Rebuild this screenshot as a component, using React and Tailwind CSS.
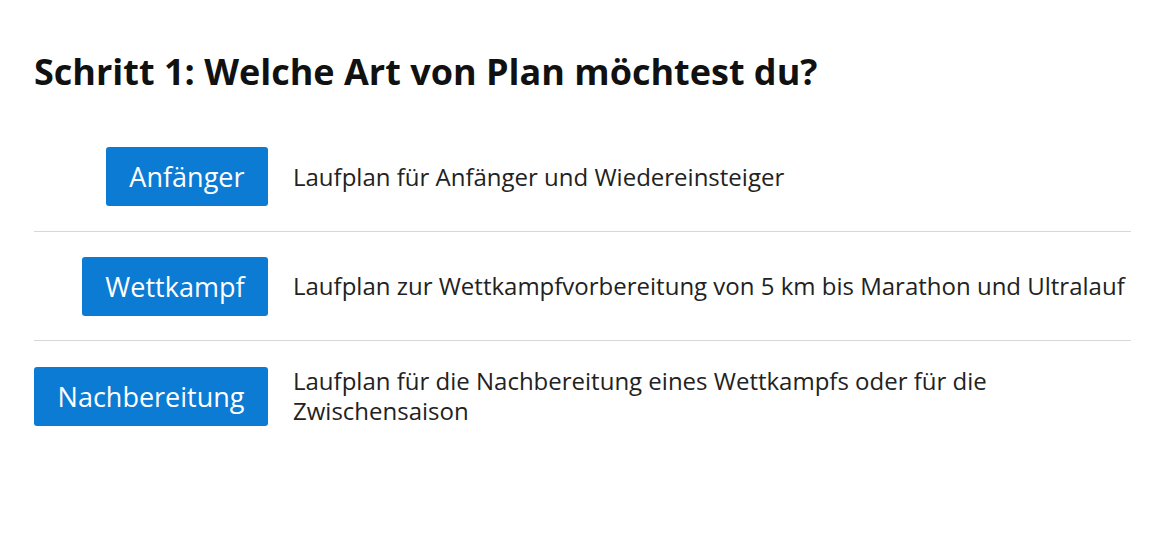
const plans = [
  { label: 'Anfänger', text: 'Laufplan für Anfänger und Wiedereinsteiger' },
  { label: 'Wettkampf', text: 'Laufplan zur Wettkampfvorbereitung von 5 km bis Marathon und Ultralauf' },
  { label: 'Nachbereitung', text: 'Laufplan für die Nachbereitung eines Wettkampfs oder für die Zwischensaison' },
];

export default function App() {
  return (
    <div className="min-h-[540px] bg-white px-[34px] pt-[50px] text-[#222] font-['Open_Sans',sans-serif]">
      <h2 className="text-[36px] leading-[43px] font-bold text-[#111]">
        Schritt 1: Welche Art von Plan möchtest du?
      </h2>
      <div className="mt-[29px] w-[1097px]">
        {plans.map((plan, i) => (
          <div
            key={plan.label}
            className={`flex items-center pt-[25px] pb-[24.5px] ${i < plans.length - 1 ? 'border-b border-[#d8d8d8]' : ''}`}
          >
            <div className="w-[234px] shrink-0 flex justify-end">
              <button className="bg-[#0b7bd3] text-white text-[27px] leading-[35px] px-[23.5px] py-[12px] rounded-[3px]">
                {plan.label}
              </button>
            </div>
            <p className="ml-[25px] text-[24px] leading-[30px]">{plan.text}</p>
          </div>
        ))}
      </div>
    </div>
  );
}
